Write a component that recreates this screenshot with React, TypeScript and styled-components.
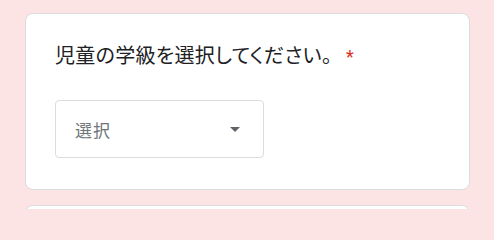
import React from 'react';
import styled, { createGlobalStyle } from 'styled-components';

const GlobalStyle = createGlobalStyle`
  html, body {
    margin: 0;
    padding: 0;
    background-color: #fde4e4;
  }
  body {
    font-family: Roboto, "Noto Sans CJK JP", sans-serif;
  }
`;

const Page = styled.div`
  display: flex;
  flex-direction: column;
  gap: 15px;
  padding: 13px 24px 0 25px;
  height: 209px;
  box-sizing: border-box;
  overflow: hidden;
`;

const Card = styled.div<{ $height: number }>`
  box-sizing: border-box;
  width: 445px;
  height: ${(p) => p.$height}px;
  flex-shrink: 0;
  background-color: white;
  border: 1px solid #dadce0;
  border-radius: 8px;
  padding: 29px 29px;
  display: flex;
  flex-direction: column;
  gap: 31px;
`;

const Title = styled.div`
  font-family: "Noto Sans CJK JP", sans-serif;
  font-feature-settings: "palt";
  font-size: 20px;
  line-height: 24px;
  color: #202124;
  letter-spacing: 0.3px;
`;

const Required = styled.span`
  color: #d93025;
  font-family: Roboto, sans-serif;
  font-size: 18px;
  padding-left: 14px;
`;

const SelectBox = styled.div`
  box-sizing: border-box;
  width: 209px;
  height: 58px;
  border: 1px solid #dadce0;
  border-radius: 4px;
  display: flex;
  align-items: center;
  justify-content: space-between;
  padding: 0 23px 0 19px;
  cursor: pointer;
`;

const Placeholder = styled.span`
  font-family: "Noto Sans CJK JP", sans-serif;
  font-size: 17px;
  letter-spacing: 1px;
  color: #70757a;
`;

const Arrow = styled.svg`
  width: 10px;
  height: 5px;
  fill: #5f6368;
`;

export default function App() {
  return (
    <>
      <GlobalStyle />
      <Page>
        <Card $height={177}>
          <Title>
            児童の学級を選択してください。
            <Required>*</Required>
          </Title>
          <SelectBox>
            <Placeholder>選択</Placeholder>
            <Arrow viewBox="0 0 10 5">
              <path d="M0 0 L10 0 L5 5 Z" />
            </Arrow>
          </SelectBox>
        </Card>
        <Card $height={120} />
      </Page>
    </>
  );
}
